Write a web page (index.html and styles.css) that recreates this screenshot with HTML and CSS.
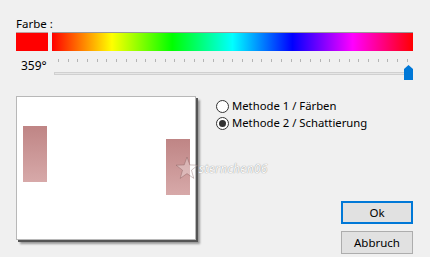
FILE: index.html
```html
<!DOCTYPE html>
<html lang="de">
  <head>
    <meta charset="UTF-8" />
    <title>Farbe</title>
    <link rel="stylesheet" href="styles.css">
  </head>
  <body>
    <div class="dialog">
      <div class="caption">Farbe :</div>
      <div class="color-row">
        <div class="swatch"></div>
        <div class="spectrum"></div>
      </div>
      <div class="slider-row">
        <div class="value">359°</div>
        <div class="slider">
          <div class="ticks" id="ticks"></div>
          <div class="track"></div>
          <svg class="thumb" width="9" height="15" viewBox="0 0 9 15">
            <path d="M0 4 L4.5 0 L9 4 V15 H0 Z" fill="#0078d7" />
          </svg>
        </div>
      </div>
      <div class="main">
        <div class="preview">
          <div class="block block-left"></div>
          <div class="block block-right"></div>
          <div class="mark">
            <svg width="24" height="24" viewBox="0 0 22 22">
              <path d="M11 1 L13.6 8.2 L21 8.4 L15.1 13 L17.2 20.5 L11 16.1 L4.8 20.5 L6.9 13 L1 8.4 L8.4 8.2 Z"
                fill="rgba(255,255,255,0.3)" stroke="rgba(120,80,80,0.4)" stroke-width="0.8" />
            </svg>
            <span>sternchen06</span>
          </div>
        </div>
        <div class="side">
          <div class="options">
            <label class="option"><span class="radio"></span>Methode 1 / Färben</label>
            <label class="option"><span class="radio checked"></span>Methode 2 / Schattierung</label>
          </div>
          <div class="buttons">
            <button class="btn default">Ok</button>
            <button class="btn">Abbruch</button>
          </div>
        </div>
      </div>
    </div>

    <script>
      // 36 steps of 10 degrees
      const ticks = document.getElementById("ticks");
      for (let i = 0; i <= 36; i++) {
        const t = document.createElement("span");
        ticks.appendChild(t);
      }
    </script>
  </body>
</html>
```

FILE: styles.css
```css
body {
  margin: 0;
  background: #f0f0f0;
  font-family: "Noto Sans", "Open Sans", sans-serif;
  font-size: 11px;
  color: #000;
}

.dialog {
  padding: 15px 17px 0 16px;
}

.caption {
  height: 17px;
  line-height: 17px;
  font-size: 11.5px;
}

.color-row {
  display: flex;
  gap: 4px;
  height: 19px;
}

.swatch {
  width: 32px;
  background: #ff0000;
  border-top: 1px solid #c0a0a0;
  box-sizing: border-box;
}

.spectrum {
  flex: 1;
  box-sizing: border-box;
  border-top: 1px solid #999;
  background: linear-gradient(
    to right,
    #ff0000 0%,
    #ffff00 16.6%,
    #00ff00 33.3%,
    #00ffff 50%,
    #0000ff 66.6%,
    #ff00ff 83.3%,
    #ff0000 100%
  );
}

.slider-row {
  display: flex;
  height: 30px;
}

.value {
  width: 36px;
  padding: 7px 0 0 5px;
  box-sizing: border-box;
  line-height: 16px;
  font-size: 12px;
}

.slider {
  flex: 1;
  position: relative;
}

.ticks {
  display: flex;
  justify-content: space-between;
  margin: 8px 5px 0 6px;
  height: 4px;
}

.ticks span {
  width: 1px;
  height: 3px;
  background: #b4b4b4;
}

.track {
  margin: 9px 0 0 2px;
  height: 3px;
  background: #e6e6e6;
  border: 1px solid #d0d0d0;
  box-sizing: border-box;
}

.thumb {
  position: absolute;
  right: 0;
  top: 14px;
}

.main {
  display: flex;
  margin-top: 15px;
}

.preview {
  position: relative;
  width: 180px;
  height: 144px;
  background: #fff;
  border: 1px solid #b8b8b8;
  box-sizing: border-box;
  box-shadow: 2px 2px 0 #555, 4px 4px 2px #999;
}

.block {
  position: absolute;
  width: 24px;
  height: 56px;
  background: linear-gradient(#bf8585, #d7a9a9);
}

.block-left {
  left: 6px;
  top: 29px;
}

.block-right {
  left: 149px;
  top: 42px;
}

.mark {
  position: absolute;
  left: 158px;
  top: 59px;
  display: flex;
  align-items: center;
  white-space: nowrap;
}

.mark span {
  font-style: italic;
  font-size: 12px;
  color: rgba(255, 255, 255, 0.95);
  text-shadow: 0 0 1px #999, 0 0 1px #bbb;
  letter-spacing: 0.3px;
}

.side {
  flex: 1;
  display: flex;
  flex-direction: column;
  padding-left: 20px;
}

.options {
  display: flex;
  flex-direction: column;
  gap: 3px;
  padding-top: 3px;
}

.option {
  display: flex;
  align-items: center;
  gap: 3px;
  height: 14px;
  line-height: 14px;
  font-size: 11.3px;
}

.radio {
  width: 11px;
  height: 11px;
  border: 1px solid #333;
  border-radius: 50%;
  background: #fff;
  position: relative;
}

.radio.checked::after {
  content: "";
  position: absolute;
  left: 2px;
  top: 2px;
  width: 7px;
  height: 7px;
  border-radius: 50%;
  background: #333;
}

.buttons {
  display: flex;
  flex-direction: column;
  align-items: flex-end;
  gap: 7px;
  margin-top: 71px;
}

.btn {
  width: 72px;
  height: 23px;
  font-family: inherit;
  font-size: 11.5px;
  background: #e1e1e1;
  border: 1px solid #adadad;
  padding: 0;
  color: #000;
}

.btn.default {
  border: 2px solid #0078d7;
}
```
